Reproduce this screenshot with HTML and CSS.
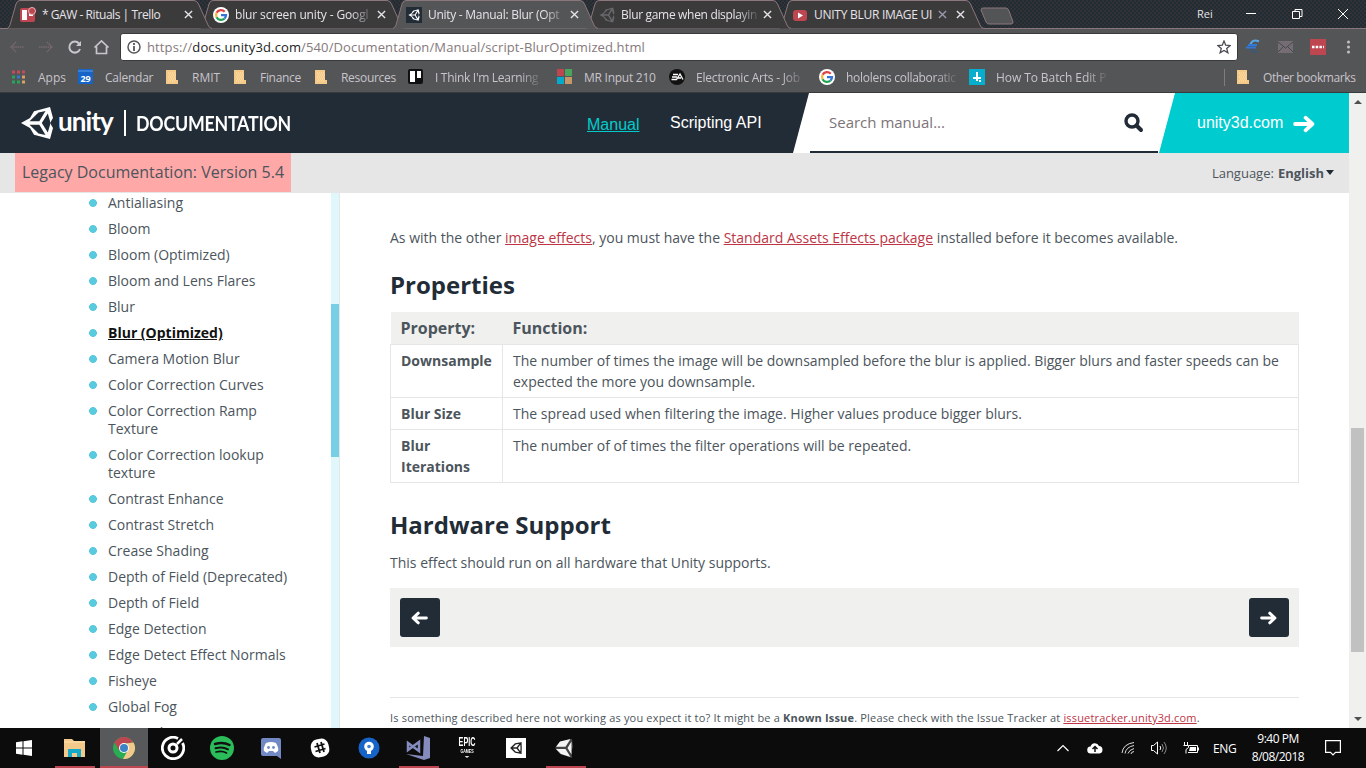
FILE: index.html
```html
<!DOCTYPE html>
<html lang="en">
<head>
<meta charset="utf-8">
<title>Unity - Manual: Blur (Optimized)</title>
<link rel="stylesheet" href="styles.css">
</head>
<body>
<svg class="defs" width="0" height="0">
  <defs>
    <symbol id="tab" viewBox="0 0 206 29"><path d="M0 28.5 Q2 28 3 25 L9 4 Q10 .5 13 .5 H187 Q190 .5 191.500 4 L201 25 Q202 28 205 28.500"/></symbol>
    <symbol id="x" viewBox="0 0 10 10"><path d="M1 1l8 8M9 1l-8 8" stroke="currentColor" stroke-width="1.500" fill="none"/></symbol>
    <symbol id="google" viewBox="0 0 16 16"><circle cx="8" cy="8" r="8" fill="#fff"/><g fill="none" stroke-width="2.300"><path d="M11.700 4.700A5 5 0 0 0 3.600 5.800" stroke="#dd4444"/><path d="M3.600 5.800a5 5 0 0 0 0 4.400" stroke="#f4b942"/><path d="M3.600 10.200a5 5 0 0 0 8 1.300" stroke="#23a455"/><path d="M11.600 11.500A5 5 0 0 0 13 8.200H8" stroke="#3575d8"/></g></symbol>
    <symbol id="folder" viewBox="0 0 12 14"><path d="M0 0h10v10h2v4H0z" fill="#f5c987"/><path d="M2 3h7M3 5h7M2 7h7M3 9h7M2 11h7" stroke="#ffe6b5" stroke-dasharray="1 1"/></symbol>
    <symbol id="cube" viewBox="0 0 34 34"><path d="M31 2.500 15 5.500 3 17 15 28.500 31 31.500 31.500 17zM5 17H20M20 17 30 3M20 17 30 31" fill="none" stroke="currentColor" stroke-width="3.800"/></symbol>
    <symbol id="unity" viewBox="0 0 34 34"><path d="M30 1 14 5.200 10 12 1 17l9 5 4 6.800L30 33l3-11-3-5 3-5zM9.500 15.300 18.500 6.500 25.500 5 19.300 15.300zM21.800 17 27.800 7.500 30 15v4l-2.200 7.500zM9.500 18.700H19.300L25.500 29l-7-1.500z" fill="currentColor" fill-rule="evenodd"/></symbol>
    <symbol id="arrow" viewBox="0 0 21 17"><path d="M2 8.500H18M12 2.500l6.500 6-6.500 6" fill="none" stroke="#fff" stroke-width="3.600" stroke-linecap="round" stroke-linejoin="round"/></symbol>
  </defs>
</svg>

<div class="tabstrip">
  <div class="tab tab-1"><svg class="tab-shape"><use href="#tab"/></svg>
    <svg class="fav" viewBox="0 0 16 16"><rect y="1" width="15" height="14" rx="2" fill="#bd4650"/><rect x="2" y="3" width="5" height="10" fill="#fff"/><rect x="9" y="3" width="4" height="6" fill="#fff"/><circle cx="12" cy="4" r="3.500" fill="#bd4650" stroke="#e7b4b8"/></svg>
    <span class="tab-title t1">* GAW - Rituals | Trello</span><svg class="close"><use href="#x"/></svg></div>
  <div class="tab tab-2"><svg class="tab-shape"><use href="#tab"/></svg>
    <svg class="fav"><use href="#google"/></svg>
    <span class="tab-title fade t2">blur screen unity - Googl</span><svg class="close"><use href="#x"/></svg></div>
  <div class="tab tab-active"><svg class="tab-shape"><use href="#tab"/></svg>
    <svg class="fav dark-fav"><use href="#unity" x="2" y="2" width="12" height="12"/></svg>
    <span class="tab-title fade t3">Unity - Manual: Blur (Opt</span><svg class="close"><use href="#x"/></svg></div>
  <div class="tab tab-4"><svg class="tab-shape"><use href="#tab"/></svg>
    <svg class="fav dim"><use href="#unity"/></svg>
    <span class="tab-title fade t4">Blur game when displayin</span><svg class="close"><use href="#x"/></svg></div>
  <div class="tab tab-5"><svg class="tab-shape"><use href="#tab"/></svg>
    <svg class="fav" viewBox="0 0 16 16"><rect x="1" y="3" width="14" height="11" rx="3" fill="#bd4650"/><path d="M6 5.500l5 3-5 3z" fill="#fff"/></svg>
    <span class="tab-title t5">UNITY BLUR IMAGE UI</span><svg class="close extra"><use href="#x"/></svg><svg class="close"><use href="#x"/></svg></div>
  <svg class="newtab" viewBox="0 0 36 18"><path d="M4 1H27Q29 1 30 4L34 15Q34 17 32 17H10Q8 17 7 15L2 3Q2 1 4 1z" fill="#535456" stroke="#8b767c"/></svg>
  <span class="profile">Rei</span>
  <svg class="winctl" viewBox="0 0 104 12" fill="none" stroke="#fff"><path d="M0 5.500h10M46.500 3.500h7v7h-7zM49 3.500v-2h7v7h-2.500M102 1l-10 10M92 1l10 10"/></svg>
</div>

<div class="toolbar">
  <svg class="navicons" viewBox="0 0 104 18" fill="none" stroke-width="1.500"><g stroke="#77696e"><path d="M1 9h13M6 4L1 9l5 5M29 9h13M37 4l5 5-5 5" stroke-dasharray="1.500 .7"/></g><g stroke="#c9c6cd" stroke-width="2"><path d="M69 5.500A5.500 5.500 0 1 0 70 11"/><path d="M71 3v5h-5z" fill="#c9c6cd" stroke="none"/><path d="M84.500 9.500 91.500 3 98.500 9.500M86.500 8.500v7h10v-7" stroke-width="1.700"/></g></svg>
  <div class="omnibox">
    <svg class="info" viewBox="0 0 14 14"><circle cx="7" cy="7" r="6" fill="none" stroke="#56565c" stroke-width="1.500"/><path d="M7 6v5M7 3v2" stroke="#56565c" stroke-width="1.800"/></svg>
    <span class="url">https://<b>docs.unity3d.com</b>/540/Documentation/Manual/script-BlurOptimized.html</span>
    <svg class="star" viewBox="0 0 14 14"><path d="M7 1l1.700 4.200 4.500.3-3.500 2.900 1.200 4.400L7 10.400l-3.900 2.400 1.200-4.400L.8 5.500l4.500-.3z" fill="none" stroke="#4c4c54" stroke-width="1.300"/></svg>
  </div>
  <svg class="exts" viewBox="0 0 116 18"><path d="M14 3.500Q7 0 5 8" fill="none" stroke="#58a8e8" stroke-width="2"/><path d="M5 8Q5 15 13 13.500" fill="none" stroke="#3c5878" stroke-width="2"/><path d="M3 7h9M1 9.500h10" stroke="#2f78d8" stroke-width="2"/><rect x="33" y="3" width="15" height="12" fill="#766d74"/><path d="M33 4l7.500 6L48 4M33 14l5-5M48 14l-5-5" fill="none" stroke="#444850"/><rect x="65" y="1" width="16" height="16" fill="#bd4650"/><path d="M67 9h12" stroke="#fff" stroke-width="2.500" stroke-dasharray="2.500 1.200"/><g fill="#c4c0c4"><circle cx="103.500" cy="4" r="1.500"/><circle cx="103.500" cy="9" r="1.500"/><circle cx="103.500" cy="14" r="1.500"/></g></svg>
</div>

<div class="bookmarks">
  <div class="bm b1"><svg viewBox="0 0 16 16"><path d="M1 3h13" stroke="#c54c58" stroke-width="3" stroke-dasharray="3 2"/><path d="M1 8h3" stroke="#26a55a" stroke-width="3"/><path d="M6 8h3" stroke="#3478d4" stroke-width="3"/><path d="M11 8h3" stroke="#d9a167" stroke-width="3"/><path d="M1 13h8" stroke="#26a55a" stroke-width="3" stroke-dasharray="3 2"/><path d="M11 13h3" stroke="#d9a167" stroke-width="3"/></svg><span>Apps</span></div>
  <div class="bm b2"><svg viewBox="0 0 16 16"><path d="M0 0h15v15H0z" fill="#1764c9"/><path d="M0 2h15" stroke="#5b9de6"/><text x="7.500" y="12.500" class="cal">29</text></svg><span>Calendar</span></div>
  <div class="bm b3"><svg class="fold"><use href="#folder"/></svg><span>RMIT</span></div>
  <div class="bm b4"><svg class="fold"><use href="#folder"/></svg><span>Finance</span></div>
  <div class="bm b5"><svg class="fold"><use href="#folder"/></svg><span>Resources</span></div>
  <div class="bm b6"><svg viewBox="0 0 16 16"><rect y="0" width="15" height="15" rx="2" fill="#111"/><path d="M2 2h5v11H2zM9 2h4v7H9z" fill="#fff"/></svg><span class="fade">I Think I'm Learning</span></div>
  <div class="bm b7"><svg viewBox="0 0 16 16"><path d="M0 0h7v7H0z" fill="#bd4650"/><path d="M8 0h7v7H8z" fill="#4ca45c"/><path d="M0 8h7v7H0z" fill="#05a9cb"/><path d="M8 8h7v7H8z" fill="#c69768"/></svg><span>MR Input 210</span></div>
  <div class="bm b8"><svg viewBox="0 0 16 16"><circle cx="8" cy="8" r="8" fill="#111"/><path d="M4 5.500h5M3 8h5M2.500 10.500h5L11 5l3 5.500M9 9h3" fill="none" stroke="#fff" stroke-width="1.300"/></svg><span class="fade">Electronic Arts - Job</span></div>
  <div class="bm b9"><svg><use href="#google"/></svg><span class="fade">hololens collaboratic</span></div>
  <div class="bm b10"><svg viewBox="0 0 16 16"><rect width="16" height="16" fill="#08aecd"/><path d="M8 3v9M4 9h8M10 12h2" stroke="#fff" stroke-width="2"/></svg><span class="fade">How To Batch Edit Pl</span></div>
  <div class="bm other"><svg class="fold"><use href="#folder"/></svg><span>Other bookmarks</span></div>
</div>

<div class="page">
  <div class="doc">
    <header class="header">
      <svg class="logo-mark"><use href="#unity"/></svg>
      <span class="logo-word">unity</span>
      <div class="logo-doc"><span>DOCUMENTATION</span></div>
      <nav><a class="on">Manual</a><a class="api">Scripting API</a></nav>
      <div class="search"><div class="field"><span>Search manual...</span>
        <svg viewBox="0 0 20 20"><circle cx="8" cy="8" r="6" fill="none" stroke="#222c37" stroke-width="3.400"/><path d="M12.500 12.500l4.500 4.500" stroke="#222c37" stroke-width="4" stroke-linecap="round"/></svg></div></div>
      <div class="site"><span>unity3d.com</span><svg><use href="#arrow"/></svg></div>
    </header>
    <div class="subbar"><span class="legacy">Legacy Documentation: Version 5.4</span><span class="lang">Language: <b>English</b><i class="caret"></i></span></div>
    <div class="body">
      <aside>
        <ul>
          <li>Antialiasing</li><li>Bloom</li><li>Bloom (Optimized)</li><li>Bloom and Lens Flares</li><li>Blur</li>
          <li class="current">Blur (Optimized)</li><li>Camera Motion Blur</li><li>Color Correction Curves</li>
          <li>Color Correction Ramp Texture</li><li>Color Correction lookup texture</li><li>Contrast Enhance</li>
          <li>Contrast Stretch</li><li>Crease Shading</li><li>Depth of Field (Deprecated)</li><li>Depth of Field</li>
          <li>Edge Detection</li><li>Edge Detect Effect Normals</li><li>Fisheye</li><li>Global Fog</li><li>Grayscale</li>
        </ul>
        <div class="track"><div class="thumb"></div></div>
      </aside>
      <main>
        <p class="intro">As with the other <a>image effects</a>, you must have the <a>Standard Assets Effects package</a> installed before it becomes available.</p>
        <h2>Properties</h2>
        <table>
          <tr><th>Property:</th><th>Function:</th></tr>
          <tr><td>Downsample</td><td>The number of times the image will be downsampled before the blur is applied. Bigger blurs and faster speeds can be expected the more you downsample.</td></tr>
          <tr><td>Blur Size</td><td>The spread used when filtering the image. Higher values produce bigger blurs.</td></tr>
          <tr><td>Blur Iterations</td><td>The number of of times the filter operations will be repeated.</td></tr>
        </table>
        <h2 class="hw">Hardware Support</h2>
        <p class="support">This effect should run on all hardware that Unity supports.</p>
        <div class="pager"><span class="btn prev"><svg><use href="#arrow"/></svg></span><span class="btn next"><svg><use href="#arrow"/></svg></span></div>
        <p class="issue">Is something described here not working as you expect it to? It might be a <b>Known Issue</b>. Please check with the Issue Tracker at <a>issuetracker.unity3d.com</a>.</p>
      </main>
    </div>
  </div>
  <div class="scrollbar"><i class="up"></i><div class="grip"></div><i class="down"></i></div>
</div>

<div class="taskbar">
  <div class="start"><svg width="16" height="16" viewBox="0 0 16 16"><path d="M0 2.300l6.500-1v6.200H0zM7.500 1.200L16 0v7.500H7.500zM0 8.500h6.500v6.200l-6.500-1zM7.500 8.500H16V16l-8.500-1.200z" fill="#fff"/></svg></div>
  <div class="task run"><svg viewBox="0 0 24 24"><path d="M1 3h8l2 2h11v16H1z" fill="#f3c98b"/><path d="M1 6h21" stroke="#ffe3ad"/><path d="M5 21v-8h13v8h-4v-4H9v4z" fill="#14a9c8"/></svg></div>
  <div class="task run focus"><svg viewBox="0 0 24 24"><circle cx="12" cy="12" r="11" fill="#27ad54"/><path d="M2.500 6.500A11 11 0 0 1 21.500 6.500L12 7.500 7.500 15z" fill="#bd4650"/><path d="M21.500 6.500A11 11 0 0 1 11 23l6-11-3-4.500z" fill="#f3c98b"/><circle cx="12" cy="12" r="5" fill="#fff"/><circle cx="12" cy="12" r="4" fill="#3c82c4"/></svg></div>
  <div class="task"><svg viewBox="0 0 24 24" fill="none" stroke="#fff"><path d="M21.500 7A10.700 10.700 0 1 1 17 2.500" stroke-width="2.800"/><circle cx="12" cy="12" r="4" stroke-width="3"/><path d="M16 8l5-5" stroke-width="2.500"/></svg></div>
  <div class="task"><svg viewBox="0 0 24 24"><circle cx="12" cy="12" r="12" fill="#2abd59"/><g fill="none" stroke="#111" stroke-linecap="round"><path d="M5 8q8-2.500 14.500 1" stroke-width="2.500"/><path d="M5.500 12.300q7-2 12.500 1" stroke-width="2"/><path d="M6 16q6-1.500 10.500 1" stroke-width="1.700"/></g></svg></div>
  <div class="task"><svg viewBox="0 0 24 24"><path d="M4 2h16q2 0 2 2v19l-4-3H4q-2 0-2-2V4q0-2 2-2z" fill="#7289c5"/><path d="M7 7q5-2 10 0 3 5 2 8l-3 2-2-2h-4l-2 2-3-2q-1-3 2-8z" fill="#fff"/><circle cx="9.500" cy="11.500" r="1.400" fill="#7289c5"/><circle cx="14.500" cy="11.500" r="1.400" fill="#7289c5"/></svg></div>
  <div class="task"><svg viewBox="0 0 24 24"><rect x="3" y="3" width="18" height="18" rx="7" fill="#fff" transform="rotate(-12 12 12)"/><path d="M9 7l3 10M13 6l3 10M6.500 11l10-3M7.500 15.500l10-3" stroke="#111" stroke-width="1.800"/></svg></div>
  <div class="task"><svg viewBox="0 0 24 24"><circle cx="12" cy="12" r="10.500" fill="#1764c9"/><circle cx="12" cy="10.500" r="4.800" fill="#fff"/><path d="M10 11h4v7h-4z" fill="#fff"/><circle cx="12" cy="10.500" r="1.800" fill="#3c82d4"/></svg></div>
  <div class="task run"><svg viewBox="0 0 24 24"><path d="M18 0l6 2v20l-6 2L0 18l17 2z" fill="#858cbd"/><path d="M2 7v7l11-8v9z" fill="none" stroke="#858cbd" stroke-width="2.500"/></svg></div>
  <div class="task"><div class="epic"><b>EPIC</b><span>GAMES</span><svg viewBox="0 0 8 3"><path d="M0 0h8L4 2z" fill="#ddd"/></svg></div></div>
  <div class="task"><div class="hub"><svg><use href="#cube"/></svg></div></div>
  <div class="task run"><svg viewBox="0 0 24 24"><path d="M19 3 7 6 2 12l5 6 12 4-.5-7L20 11z" fill="#444"/><path d="M7 5.500 17.500 3 12.500 10.800H3zM3 13h9.500l5 8L8 18zM14.500 12l4-6.500v13z" fill="#f4f4f4"/></svg></div>
  <div class="tray">
    <svg class="chev" viewBox="0 0 12 8"><path d="M.5 7L6 1.500 11.500 7" fill="none" stroke="#fff" stroke-width="1.200"/></svg>
    <svg class="cloud" viewBox="0 0 16 12"><path d="M4 11.500a3.500 3.500 0 0 1-.5-7A4.500 4.500 0 0 1 12 4a3.800 3.800 0 0 1 .5 7.500z" fill="#fff"/><path d="M8 10V5M5.500 7L8 4.500 10.500 7" stroke="#111" stroke-width="1.500" fill="none"/></svg>
    <svg class="wifi" viewBox="0 0 14 14" fill="none" stroke="#ddd"><path d="M1 12Q2 3 13 1.500M4 12.500Q5 6 13 4.500M7 12.500Q8 9 13 7.500M10 13q0-2 3-2.500"/></svg>
    <svg class="vol" viewBox="0 0 16 14" fill="none" stroke="#fff"><path d="M.5 4.500h2l4-3.500v12l-4-3.500h-2z"/><path d="M9 5q1.500 2 0 4"/><path d="M11 3q3 4 0 8M13 1q4.500 6 0 12" stroke="#888"/></svg>
    <svg class="bat" viewBox="0 0 16 12"><path d="M6 3.500h8.500v7H5M15.500 5.500v3M1.500 0v3M4.500 0v3M.5 3.500h5v2l-2.500 2v4" fill="none" stroke="#fff"/><path d="M7 5h6v4H6z" fill="#fff"/></svg>
    <span class="eng">ENG</span>
    <div class="clock"><span>9:40 PM</span><span class="date">8/08/2018</span></div>
    <svg class="note" viewBox="0 0 16 16"><path d="M.6.600h14.800v11.800H10.500L8 15l-2.500-2.600H.600z" fill="none" stroke="#fff" stroke-width="1.200"/></svg>
  </div>
</div>
</body>
</html>
```

FILE: styles.css
```css
* { box-sizing: border-box; }
body { margin: 0; width: 1366px; height: 768px; overflow: hidden; display: flex; flex-direction: column; font-family: "Open Sans", "Noto Sans", sans-serif; color: #4c555c; }
svg { display: block; flex: none; }
.defs { position: absolute; }

/* tab strip */
.tabstrip { height: 29px; flex: none; display: flex; padding-left: 7px; align-items: flex-start; color: #e6e3e8; font-size: 12px; background: conic-gradient(#303235 25%, #222c35 0 50%, #303235 0 75%, #222c35 0) 0 0 / 4px 4px; border-bottom: 1px solid #8b767c; }
.tab { position: relative; width: 193px; height: 29px; flex: none; display: flex; align-items: center; padding-left: 13px; }
.tab-shape { position: absolute; left: 0; top: 0; width: 206px; height: 29px; fill: #3c3b3c; stroke: #8b767c; }
.tab-1 { z-index: 4; } .tab-2 { z-index: 3; } .tab-active { z-index: 5; } .tab-4 { z-index: 3; } .tab-5 { z-index: 2; }
.tab-active .tab-shape { fill: #545557; }
.fav { position: relative; width: 16px; height: 16px; margin-right: 6px; }
.dark-fav { background: #222c37; color: #fff; }
.dim { color: #68686d; }
.tab-title { position: relative; width: 136px; white-space: nowrap; }
.t1 { letter-spacing: -.45px; } .t2 { letter-spacing: -.14px; } .t3 { letter-spacing: -.28px; } .t4 { letter-spacing: -.32px; }
.t5 { letter-spacing: -.27px; width: 122px; }
.fade { -webkit-mask-image: linear-gradient(90deg, #000 calc(100% - 20px), rgba(0,0,0,.15)); mask-image: linear-gradient(90deg, #000 calc(100% - 20px), rgba(0,0,0,.15)); }
.close { position: relative; width: 9px; height: 9px; margin-left: 6px; }
.extra { margin-left: 2px; color: #9a98ad; }
.extra + .close { margin-left: 9px; }
.newtab { width: 36px; height: 18px; margin: 7px 0 0 7px; }
.profile { width: 49px; font-size: 11px; line-height: 28px; margin-left: 182px; }
.winctl { width: 104px; height: 12px; margin-top: 8px; }

/* address bar */
.toolbar { height: 33px; flex: none; background: #545557; display: flex; align-items: center; padding-left: 10px; padding-top: 3px; }
.navicons { width: 104px; height: 18px; margin-right: 6px; }
.omnibox { width: 1118px; height: 28px; background: #fff; border: 1px solid #3a393b; border-radius: 3px; display: flex; align-items: center; padding: 0 6px; }
.info { width: 14px; height: 14px; margin-right: 6px; }
.url { font-size: 13px; color: #85797b; flex: 1; letter-spacing: .12px; }
.url b { font-weight: 400; color: #222; }
.star { width: 14px; height: 14px; }
.exts { width: 116px; height: 18px; margin-left: 7px; }

/* bookmarks */
.bookmarks { height: 31px; flex: none; background: #545557; border-bottom: 1px solid #3a393b; display: flex; align-items: center; padding-left: 11px; font-size: 12px; color: #c8c4cb; }
.bm { display: flex; align-items: center; flex: none; white-space: nowrap; }
.bm svg { width: 16px; height: 16px; margin-right: 11px; }
.bm .fold { width: 12px; height: 14px; margin-right: 14px; }
.cal { font-size: 9px; font-weight: 700; fill: #fff; text-anchor: middle; }
.b1 { width: 67px; } .b2 { width: 88px; letter-spacing: -.26px; } .b3 { width: 68px; } .b4 { width: 81px; letter-spacing: -.3px; }
.b5 { width: 93px; letter-spacing: -.3px; } .b6 { width: 149px; letter-spacing: -.3px; } .b7 { width: 112px; letter-spacing: -.25px; }
.b8 { width: 150px; letter-spacing: -.2px; } .b9 { width: 150px; letter-spacing: -.28px; } .b10 { width: 255px; letter-spacing: -.08px; }
.b6 span { width: 105px; } .b8 span { width: 106px; } .b9 span, .b10 span { width: 110px; }
.other { border-left: 1px solid #8b767c; padding-left: 12px; letter-spacing: -.4px; }

/* web page */
.page { flex: 1; min-height: 0; display: flex; background: #fff; }
.doc { width: 1349px; display: flex; flex-direction: column; }
.header { height: 60px; flex: none; display: flex; align-items: center; background: linear-gradient(90deg, #222c37 0 810px, #fff 810px); color: #fff; padding-left: 20px; font-family: "Liberation Sans", Arial, sans-serif; }
.logo-mark { width: 34px; height: 34px; }
.logo-word { width: 70px; padding-left: 4px; font: 700 26px/34px Lato, sans-serif; letter-spacing: -.9px; padding-bottom: 4px; }
.logo-doc { width: 463px; height: 26px; border-left: 2px solid #fff; padding-left: 10px; font: 700 20px/26px Lato, sans-serif; letter-spacing: -.25px; }
.logo-doc span { display: inline-block; transform: scaleX(.888); transform-origin: 0 50%; }
nav { display: flex; width: 206px; font-size: 16px; line-height: 20px; }
.on { width: 83px; color: #00cccc; text-decoration: underline; padding-top: 3px; }
.api { padding-top: 1px; }
.search { width: 366px; height: 60px; background: #fff; clip-path: polygon(16px 0, 100% 0, 100% 100%, 0 100%); padding-left: 17px; color: #7c7478; }
.field { height: 60px; display: flex; justify-content: space-between; align-items: center; border-bottom: 2px solid #222c37; width: 348px; padding: 0 14px 0 19px; font: 15px "Open Sans", sans-serif; }
.field svg { width: 20px; height: 20px; margin-top: 2px; }
.site { flex: 1; height: 60px; background: #00cccf; clip-path: polygon(16px 0, 100% 0, 100% 100%, 0 100%); display: flex; align-items: center; padding-left: 38px; font-size: 16px; }
.site svg { width: 22px; height: 18px; margin: 2px 0 0 10px; }
.subbar { height: 40px; flex: none; background: #e6e6e6; display: flex; justify-content: space-between; padding: 0 15px; }
.legacy { height: 39px; width: 276px; background: #ffa8a8; padding-left: 7px; font-size: 16px; line-height: 38px; white-space: nowrap; }
.lang { font-size: 13px; line-height: 41px; display: flex; }
.lang b { margin: 0 2px 0 4px; }
.caret { border: 4px solid transparent; border-top: 5px solid #222c37; border-bottom: 0; height: 0; margin-top: 17px; }
.body { flex: 1; min-height: 0; display: flex; overflow: hidden; }
aside { width: 340px; flex: none; border-right: 1px solid #e6e6e6; display: flex; justify-content: space-between; }
ul { margin: -3px 0 0; padding: 0 0 0 89px; width: 300px; list-style: none; font-size: 14px; line-height: 18px; }
li { padding: 4px 0 4px 19px; background: radial-gradient(circle at 4px 13px, #5acbdf 3.600px, transparent 4.200px); }
.current { color: #111; font-weight: 700; text-decoration: underline; }
.track { width: 8px; background: #e0f8fc; padding-top: 111px; }
.thumb { height: 153px; background: #77cfe5; }
main { width: 909px; margin-left: 50px; font-size: 14px; line-height: 21px; }
main p { margin: 0; }
main a { color: #bd3545; text-decoration: underline; }
.intro { padding-top: 34px; }
h2 { color: #222c37; font-size: 24px; line-height: 32px; margin: 21px 0 11px; }
table { border-collapse: collapse; width: 909px; table-layout: fixed; }
th { background: #f0f0ee; text-align: left; font-size: 16px; line-height: 21px; padding: 6px 10px 5px; }
td { border: 1px solid #e6e6e6; padding: 5px 10px; vertical-align: top; }
th:first-child { width: 112px; }
td:first-child { font-weight: 700; }
.hw { margin-top: 26px; }
.pager { margin-top: 15px; height: 59px; background: #f0f0ee; display: flex; justify-content: space-between; padding: 10px; }
.btn { width: 40px; height: 39px; border-radius: 3px; background: #222c37; display: flex; align-items: center; justify-content: center; }
.btn svg { width: 17px; height: 14px; }
.next { padding-right: 2px; }
.prev { transform: scaleX(-1); }
main .issue { margin-top: 50px; border-top: 1px solid #e6e6e6; padding-top: 9px; font-size: 11px; letter-spacing: .18px; white-space: nowrap; }
.scrollbar { width: 17px; background: #f0f0ee; display: flex; flex-direction: column; align-items: center; justify-content: space-between; padding: 7px 0; }
.up, .down { border: 4px solid transparent; height: 0; }
.up { border-bottom-color: #505050; border-top: 0; }
.down { border-top-color: #505050; border-bottom: 0; }
.grip { width: 13px; height: 224px; background: #c1c1c1; margin-top: 259px; }

/* taskbar */
.taskbar { height: 40px; flex: none; background: #0c0c0d; display: flex; align-items: stretch; color: #fff; font-size: 12px; }
.start { width: 50px; padding-left: 16px; display: flex; align-items: center; }
.task { width: 49.100px; display: flex; align-items: center; justify-content: center; }
.task > svg { width: 24px; height: 24px; }
.run { background: linear-gradient(#bd4650, #bd4650) 5px 38px / 40px 2px no-repeat; }
.focus { background: linear-gradient(#bd4650, #bd4650) 0 38px / 100% 2px no-repeat, #58595b; width: 48px; margin-left: 1px; }
.epic { display: flex; flex-direction: column; align-items: center; font-family: "Liberation Sans", sans-serif; transform: scaleX(.6); }
.epic b { font-size: 12px; line-height: 11px; }
.epic span { font-size: 6px; line-height: 6px; font-weight: 700; }
.epic svg { width: 10px; height: 3px; margin-top: 2px; }
.hub { width: 20px; height: 20px; background: #fff; color: #222; padding: 4px; }
.hub svg { width: 12px; height: 12px; }
.tray { margin-left: auto; width: 309px; display: flex; align-items: center; }
.chev { width: 12px; height: 8px; }
.cloud { width: 16px; height: 12px; margin-left: 18px; }
.wifi { width: 14px; height: 14px; margin-left: 18px; }
.vol { width: 16px; height: 14px; margin-left: 16px; }
.bat { width: 16px; height: 12px; margin-left: 16px; }
.eng { margin-left: 14px; width: 38px; letter-spacing: -.4px; }
.clock { width: 54px; display: flex; flex-direction: column; align-items: center; line-height: 18px; letter-spacing: -.5px; white-space: nowrap; }
.note { width: 16px; height: 16px; margin-left: 20px; }
```
